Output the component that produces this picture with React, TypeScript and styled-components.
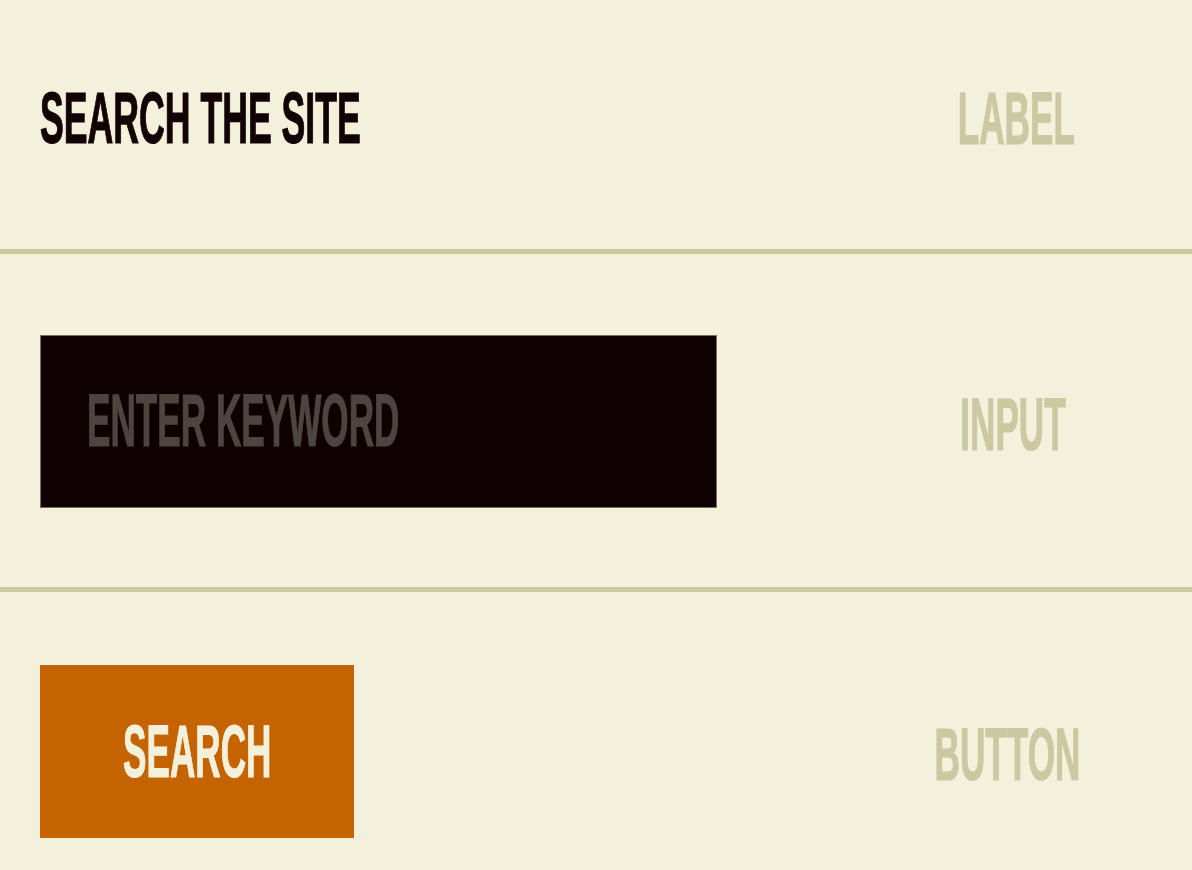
import React from "react";
import styled, { createGlobalStyle } from "styled-components";

const GlobalStyle = createGlobalStyle`
  html, body {
    margin: 0;
    padding: 0;
    background: #f3f1dc;
  }
  body {
    font-family: "Liberation Sans", Arial, sans-serif;
  }
`;

const Page = styled.main`
  width: 1192px;
  min-height: 870px;
  background: #f3f1dc;
  display: flex;
  flex-direction: column;
  overflow: hidden;
`;

const Row = styled.section<{ $height?: number; $padTop?: number; $padBottom?: number; $align?: string; $divider?: boolean }>`
  display: flex;
  align-items: ${(p) => p.$align ?? "center"};
  justify-content: space-between;
  box-sizing: border-box;
  height: ${(p) => (p.$height ? `${p.$height}px` : "auto")};
  padding: ${(p) => p.$padTop ?? 0}px 0 ${(p) => p.$padBottom ?? 0}px 40px;
  border-bottom: ${(p) => (p.$divider ? "5px solid #cbc8a2" : "none")};
`;

/* Tall condensed display lettering, squeezed horizontally */
const Condensed = styled.span<{ $origin?: string; $size?: number; $squeeze?: number }>`
  display: inline-block;
  font-family: "Liberation Sans", Arial, sans-serif;
  font-weight: 700;
  font-size: ${(p) => p.$size ?? 74}px;
  line-height: 1;
  text-transform: uppercase;
  white-space: nowrap;
  -webkit-text-stroke: 1.2px currentColor;
  transform: scaleX(${(p) => p.$squeeze ?? 0.475});
  transform-origin: ${(p) => p.$origin ?? "left"} center;
`;

const Heading = styled.h1`
  margin: 0;
  color: #120305;
  font-size: inherit;
  font-weight: inherit;
`;

const SideNote = styled.div<{ $shift?: number; $gutter?: number }>`
  width: 190px;
  margin-right: ${(p) => p.$gutter ?? 85}px;
  margin-top: ${(p) => p.$shift ?? 0}px;
  display: flex;
  justify-content: center;
  color: #cbc8a2;
`;

const Field = styled.div`
  box-sizing: border-box;
  width: 677px;
  height: 173px;
  background: #0f0002;
  border: 1px solid #7d6d58;
  display: flex;
  align-items: center;
  padding-left: 46px;
  color: #4e4541;
  cursor: text;
`;

const Button = styled.button`
  box-sizing: border-box;
  width: 314px;
  height: 173px;
  border: none;
  margin: 0;
  padding: 0;
  background: #c46300;
  color: #f3f1dc;
  display: flex;
  align-items: center;
  justify-content: center;
  cursor: pointer;
`;

export default function App() {
  return (
    <>
      <GlobalStyle />
      <Page>
        <Row $height={254} $padBottom={14} $divider>
          <Heading>
            <Condensed $size={72} $squeeze={0.495}>Search the site</Condensed>
          </Heading>
          <SideNote $shift={2} $gutter={81}>
            <Condensed $origin="center">Label</Condensed>
          </SideNote>
        </Row>
        <Row $height={338} $padTop={1} $divider>
          <Field role="textbox" aria-label="Enter keyword">
            <Condensed>Enter keyword</Condensed>
          </Field>
          <SideNote $shift={8} $gutter={84}>
            <Condensed $origin="center">Input</Condensed>
          </SideNote>
        </Row>
        <Row $align="flex-start" $padTop={73}>
          <Button type="button">
            <Condensed $origin="center">Search</Condensed>
          </Button>
          <SideNote $shift={53} $gutter={90}>
            <Condensed $origin="center">Button</Condensed>
          </SideNote>
        </Row>
      </Page>
    </>
  );
}
